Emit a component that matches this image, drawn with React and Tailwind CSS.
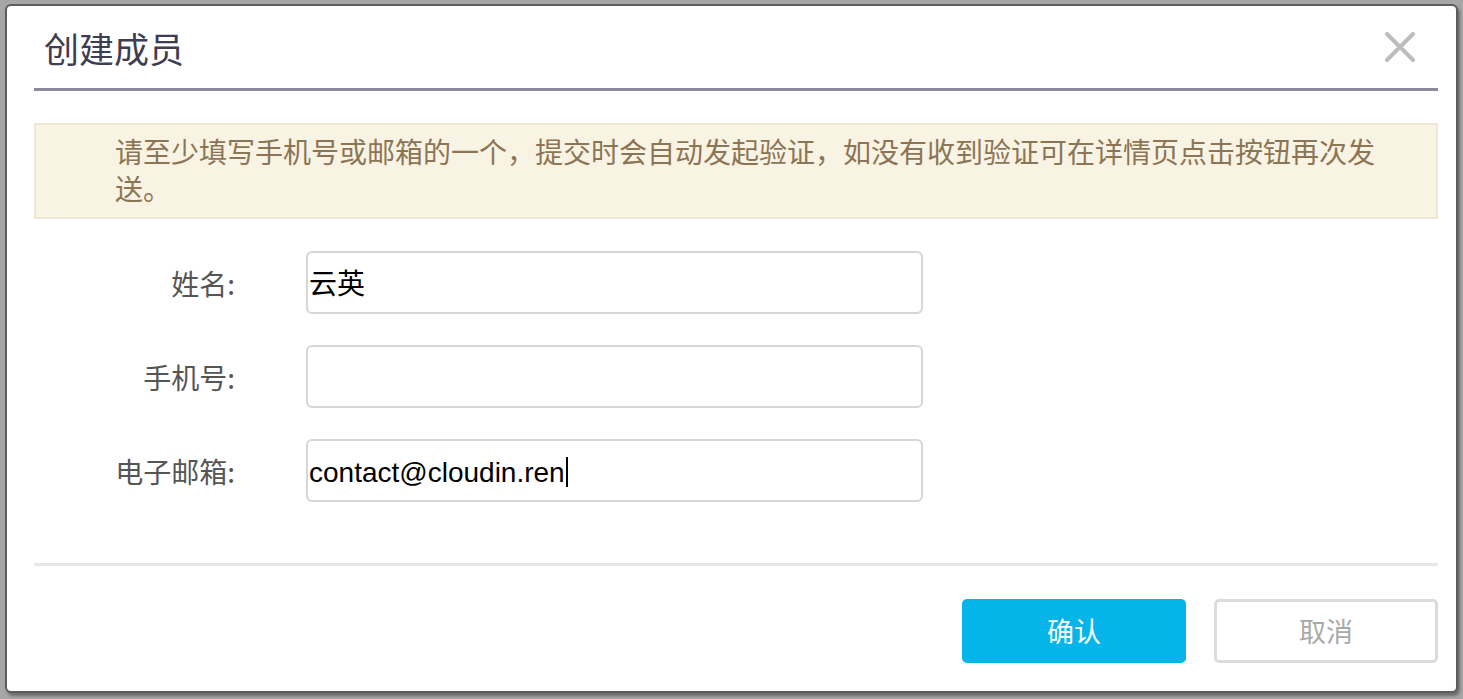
import React from 'react';

const cjk = { fontFamily: '"Noto Sans CJK SC", "Noto Sans", sans-serif' };
const latin = { fontFamily: '"Liberation Sans", "Noto Sans CJK SC", sans-serif' };

const fields = [
    { label: '姓名:', value: '云英' },
    { label: '手机号:', value: '' },
    { label: '电子邮箱:', value: 'contact@cloudin.ren', focused: true },
];

const CloseIcon = () => (
    <svg width="30" height="30" viewBox="0 0 30 30" fill="none">
        <path d="M2 2 L28 28 M28 2 L2 28" stroke="#bdbdbd" strokeWidth="4" strokeLinecap="round" />
    </svg>
);

const App = () => {
    return (
        <div className="w-[1463px] h-[699px] bg-[#a6a6a6] pt-[4px] pl-[5px] overflow-hidden" style={cjk}>
            <div className="w-[1453px] h-[689px] bg-white border-2 border-[#5c5c5c] rounded-[6px] shadow-[2px_3px_3px_rgba(0,0,0,0.35)] pl-[27px] pr-[18px] flex flex-col">
                {/* Header */}
                <div className="h-[85px] border-b-[3px] border-[#8c889e] flex items-center justify-between pl-[10px] pr-[23px]">
                    <h1 className="text-[35px] text-[#3e3d52] leading-none">创建成员</h1>
                    <CloseIcon />
                </div>

                {/* Notice */}
                <div className="mt-[32px] bg-[#f9f3e4] border-2 border-[#eee7d5] pt-[8px] pb-[10px] pl-[79px] pr-[50px]">
                    <p className="text-[28px] leading-[37px] text-[#8b7555]">
                        请至少填写手机号或邮箱的一个，提交时会自动发起验证，如没有收到验证可在详情页点击按钮再次发送。
                    </p>
                </div>

                {/* Form */}
                <div className="mt-[32px] flex flex-col gap-[31px]">
                    {fields.map((f) => (
                        <div key={f.label} className="flex items-center">
                            <label className="w-[201px] text-right text-[28px] leading-none text-[#555555]">{f.label}</label>
                            <div className="ml-[71px] w-[617px] h-[63px] border-2 border-[#d6d6d6] rounded-[6px] flex items-center pl-[1px] pt-[5px]">
                                <span className="text-[28px] leading-none text-black" style={latin}>{f.value}</span>
                                {f.focused && <span className="w-[2px] h-[30px] bg-black ml-[1px] -mt-[3px]"></span>}
                            </div>
                        </div>
                    ))}
                </div>

                {/* Footer */}
                <div className="mt-[61px] h-[3px] bg-[#e6e6e6]"></div>
                <div className="mt-[33px] flex justify-end gap-[28px]">
                    <button className="w-[224px] h-[64px] rounded-[5px] bg-[#05b5ea] text-white text-[27px]">确认</button>
                    <button className="w-[224px] h-[64px] rounded-[5px] border-[3px] border-[#dcdcdc] bg-white text-[#a9a9a9] text-[27px]">取消</button>
                </div>
            </div>
        </div>
    );
};

export default App;
